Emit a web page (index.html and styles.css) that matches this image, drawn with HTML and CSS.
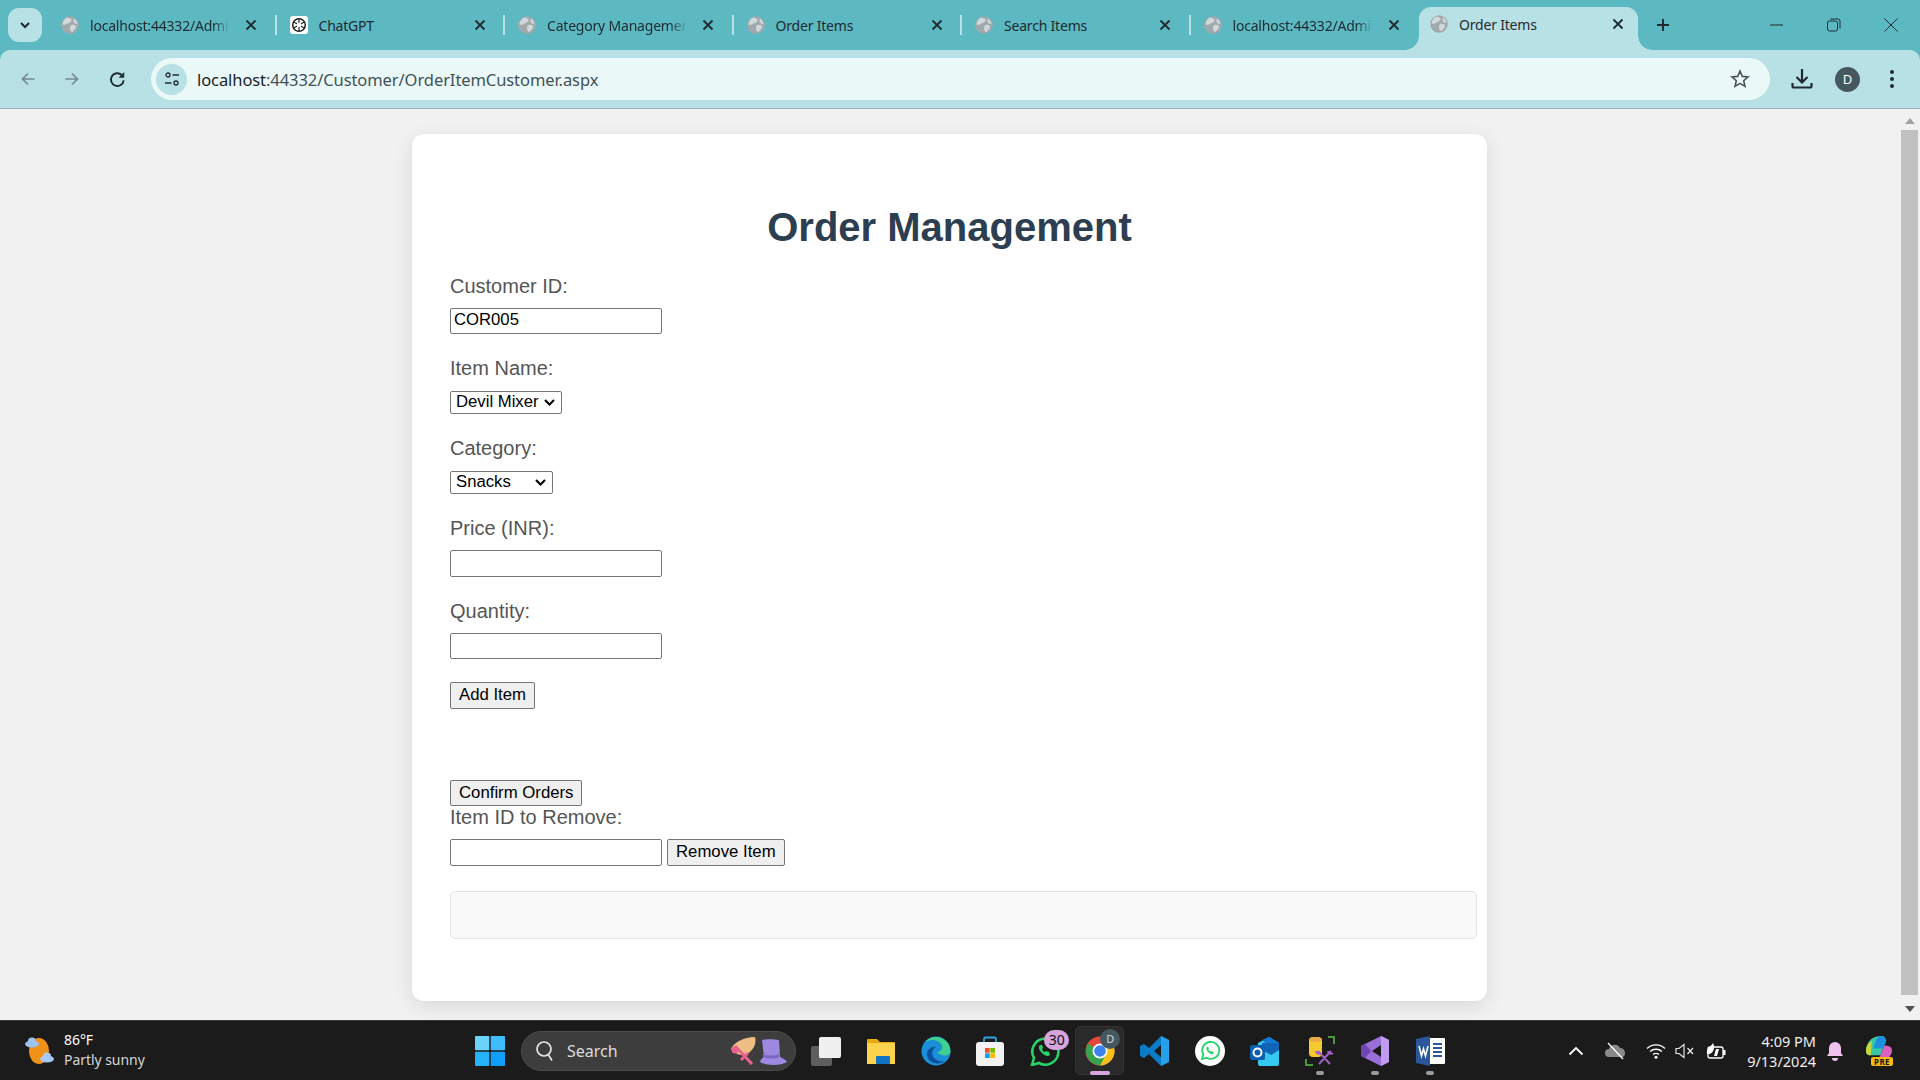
FILE: index.html
```html
<!DOCTYPE html>
<html lang="en">
<head>
<meta charset="utf-8">
<title>Order Items</title>
<link rel="stylesheet" href="styles.css">
</head>
<body>
<svg class="defs" width="0" height="0" aria-hidden="true">
  <symbol id="globe" viewBox="0 0 18 18">
    <circle cx="9" cy="9" r="8.800" fill="#a2a9ad"/>
    <path d="M6 1.500c2 .3 4 .8 4.500 2.200S9 6.500 7 7.300 4 9.500 1.500 8.500C1.500 6 3.500 2.800 6 1.500zM10.500 9c2.500-.5 4.500.5 4.500 2s-2.500 3.200-3.500 5c-1.800 0-2.500-2-2.500-3.800s.3-2.600 1.500-3.200zM13 2.600c1.800 1.200 3 3.200 3.400 5.200-1.300.4-2.800 0-3.500-1.500S12.500 3.600 13 2.600z" fill="#cfd9dc"/>
  </symbol>
  <symbol id="close" viewBox="0 0 12 12">
    <path d="M1.500 1.500l9 9M10.500 1.500l-9 9" stroke="#1f2a30" stroke-width="1.800" fill="none"/>
  </symbol>
</svg>

<header class="chrome">
<div class="tabstrip">
  <div class="tab-search"><svg width="12" height="12" viewBox="0 0 12 12"><path d="M2 4l4 4 4-4" fill="none" stroke="#1f2a30" stroke-width="2"/></svg></div>
  <div class="tab"><svg class="fav"><use href="#globe"/></svg><span class="tab-title fade">localhost:44332/Admin</span><svg class="tab-x"><use href="#close"/></svg></div>
  <i class="sep"></i>
  <div class="tab"><svg class="fav" viewBox="0 0 18 18"><rect width="18" height="18" rx="3" fill="#fff"/><circle cx="9" cy="9" r="6.300" fill="none" stroke="#222" stroke-width="1.500"/><path d="M9 3v12M3.800 6l10.400 6M14.200 6L3.800 12" stroke="#222" stroke-width="1.200"/><circle cx="9" cy="9" r="2.300" fill="#fff"/></svg><span class="tab-title">ChatGPT</span><svg class="tab-x"><use href="#close"/></svg></div>
  <i class="sep"></i>
  <div class="tab"><svg class="fav"><use href="#globe"/></svg><span class="tab-title fade">Category Management</span><svg class="tab-x"><use href="#close"/></svg></div>
  <i class="sep"></i>
  <div class="tab"><svg class="fav"><use href="#globe"/></svg><span class="tab-title">Order Items</span><svg class="tab-x"><use href="#close"/></svg></div>
  <i class="sep"></i>
  <div class="tab"><svg class="fav"><use href="#globe"/></svg><span class="tab-title">Search Items</span><svg class="tab-x"><use href="#close"/></svg></div>
  <i class="sep"></i>
  <div class="tab"><svg class="fav"><use href="#globe"/></svg><span class="tab-title fade">localhost:44332/Admin</span><svg class="tab-x"><use href="#close"/></svg></div>
  <div class="tab active"><svg class="fav"><use href="#globe"/></svg><span class="tab-title">Order Items</span><svg class="tab-x"><use href="#close"/></svg></div>
  <svg class="newtab" width="14" height="14" viewBox="0 0 14 14"><path d="M7 1v12M1 7h12" stroke="#1f2a30" stroke-width="1.900"/></svg>
  <div class="win-ctrls">
    <svg width="14" height="14" viewBox="0 0 14 14"><path d="M0 7h13" stroke="#1f2a30" stroke-width="1"/></svg>
    <svg width="14" height="14" viewBox="0 0 14 14"><rect x=".5" y="3" width="10" height="10" rx="2" fill="none" stroke="#1f2a30"/><path d="M3.500 1h7.500a2 2 0 0 1 2 2v7.500" fill="none" stroke="#1f2a30"/></svg>
    <svg width="14" height="14" viewBox="0 0 14 14"><path d="M.5.500l13 13M13.500.500l-13 13" stroke="#1f2a30" stroke-width="1"/></svg>
  </div>
</div>

<div class="toolbar">
  <div class="nav-btns">
    <svg width="16" height="16" viewBox="0 0 16 16"><path d="M14.500 8H2.500M8 2.500L2.500 8 8 13.500" fill="none" stroke="#74898e" stroke-width="1.700"/></svg>
    <svg width="16" height="16" viewBox="0 0 16 16"><path d="M1.500 8h12M8 2.500L13.500 8 8 13.500" fill="none" stroke="#74898e" stroke-width="1.700"/></svg>
    <svg class="reload" width="17" height="17" viewBox="0 0 16 16"><path d="M13.800 8.800A6 6 0 1 1 12 3.800" fill="none" stroke="#1f2a30" stroke-width="1.800"/><path d="M14.300 1v5.300H9z" fill="#1f2a30"/></svg>
  </div>
  <div class="omnibox">
    <div class="site-chip"><svg width="16" height="16" viewBox="0 0 16 16"><circle cx="4" cy="4" r="2" fill="none" stroke="#1f2a30" stroke-width="1.300"/><path d="M8.500 4H15M1 12h6.500" stroke="#1f2a30" stroke-width="1.300"/><circle cx="12" cy="12" r="2" fill="none" stroke="#1f2a30" stroke-width="1.300"/></svg></div>
    <div class="url"><span class="host">localhost</span>:44332/Customer/OrderItemCustomer.aspx</div>
    <svg class="star" width="20" height="20" viewBox="0 0 20 20"><path d="M10 2l2.300 5.400 5.700.5-4.300 3.800 1.300 5.700L10 14.400 5 17.400l1.300-5.700L2 7.900l5.700-.5z" fill="none" stroke="#4a5559" stroke-width="1.600"/></svg>
  </div>
  <div class="tool-icons">
    <svg width="22" height="22" viewBox="0 0 22 22"><path d="M11 1v13M5.500 9l5.500 5.500L16.500 9" fill="none" stroke="#1f2a30" stroke-width="2.200"/><path d="M1.500 15v3a1.500 1.500 0 0 0 1.500 1.500h16a1.500 1.500 0 0 0 1.500-1.500v-3" fill="none" stroke="#1f2a30" stroke-width="2.200"/></svg>
    <div class="avatar">D</div>
    <svg class="menu-dots" width="6" height="20" viewBox="0 0 6 20"><circle cx="3" cy="3" r="2" fill="#1f2a30"/><circle cx="3" cy="10" r="2" fill="#1f2a30"/><circle cx="3" cy="17" r="2" fill="#1f2a30"/></svg>
  </div>
</div>
</header>

<div class="viewport">
  <main class="card">
    <h1>Order Management</h1>
    <div class="field">
      <label>Customer ID:</label>
      <input class="text" type="text" value="COR005">
    </div>
    <div class="field f-sel">
      <label>Item Name:</label>
      <select class="sel"><option>Devil Mixer</option></select>
    </div>
    <div class="field f-sel">
      <label>Category:</label>
      <select class="sel sel-cat"><option>Snacks</option></select>
    </div>
    <div class="field">
      <label>Price (INR):</label>
      <input class="text tall" type="text">
    </div>
    <div class="field f-qty">
      <label>Quantity:</label>
      <input class="text" type="text">
    </div>
    <button class="btn add">Add Item</button>
    <button class="btn confirm">Confirm Orders</button>
    <label class="remove-label">Item ID to Remove:</label>
    <div class="remove-row">
      <input class="text tall" type="text">
      <button class="btn add">Remove Item</button>
    </div>
    <div class="grid-box"></div>
  </main>
  <div class="scrollbar">
    <svg width="10" height="6" viewBox="0 0 10 6"><path d="M5 0l5 6H0z" fill="#a3a3a3"/></svg>
    <div class="thumb"></div>
    <svg width="10" height="6" viewBox="0 0 10 6"><path d="M0 0h10L5 6z" fill="#505050"/></svg>
  </div>
</div>

<footer class="taskbar">
  <div class="weather">
    <svg width="32" height="32" viewBox="0 0 32 32"><ellipse cx="15" cy="16" rx="10" ry="13" fill="#f0921a"/><ellipse cx="8" cy="9" rx="7" ry="3.500" fill="#9cc3f2"/><ellipse cx="8" cy="6" rx="4" ry="3.500" fill="#9cc3f2"/><ellipse cx="23" cy="24" rx="7" ry="3.500" fill="#a6c9f5"/><ellipse cx="23" cy="21" rx="4" ry="3.500" fill="#a6c9f5"/></svg>
    <div class="weather-text"><div class="temp">86°F</div><div class="cond">Partly sunny</div></div>
  </div>
  <div class="center-icons">
    <svg class="ti start" viewBox="0 0 30 30"><rect width="14.300" height="14.300" rx="1" fill="#6ad2fb"/><rect x="15.700" width="14.300" height="14.300" rx="1" fill="#3fbdfa"/><rect y="15.700" width="14.300" height="14.300" rx="1" fill="#25b2fb"/><rect x="15.700" y="15.700" width="14.300" height="14.300" rx="1" fill="#0f9ffa"/></svg>
    <div class="search">
      <svg width="20" height="22" viewBox="0 0 20 22"><circle cx="9" cy="9" r="7" fill="none" stroke="#e6e6e6" stroke-width="1.700"/><path d="M13.500 15l3.500 5.500" stroke="#e6e6e6" stroke-width="1.700"/></svg>
      <span>Search</span>
      <svg class="hats" width="58" height="28" viewBox="0 0 58 28"><path d="M1 12C4 5 14 0 25 0c2 6-2 15-10 18-5 1-9-1-14-6z" fill="#eebd82"/><path d="M5 9l17 18M11 23l7-7" stroke="#e9618d" stroke-width="3"/><circle cx="5" cy="13" r="3.500" fill="#e9618d"/><path d="M32 3c4-1 12-1 17 0l1 17c3 1 6 3 7 5-6 4-21 4-27 0 1-3 2-4 4-5z" fill="#9d8ae0"/><path d="M33 17c5 2 11 2 16 0v3c-5 2-11 2-16 0z" fill="#7a66c8"/></svg>
    </div>
    <svg class="ti" viewBox="0 0 30 30"><rect x="0" y="10" width="21" height="20" rx="2" fill="#5e5e5e"/><rect x="8" y="10" width="13" height="12" fill="#a9a9a9"/><rect x="8" y="1" width="22" height="21" rx="2" fill="#f0f0f0"/></svg>
    <svg class="ti" viewBox="0 0 30 30"><path d="M1 4a1 1 0 0 1 1-1h9l3 3h14a1 1 0 0 1 1 1v21H1z" fill="#e9a80b"/><rect x="1" y="7" width="28" height="21" fill="#ffd24d"/><rect x="10" y="20" width="14" height="8" rx="1" fill="#1272c4"/></svg>
    <svg class="ti" viewBox="0 0 30 30"><circle cx="15" cy="15" r="14.500" fill="#1a8fd8"/><path d="M29.500 16A14.500 14.500 0 0 0 4 6c7-4 15-2 17 4 1 3-2 6-5 6 4 5 13.500 4 13.500 0z" fill="#3fcf8e"/><path d="M6 18c0-5 5-8 9-7-4 2-5 7-2 11 3 3 7 4 11 3-6 5-18 2-18-7z" fill="#0d4f9a"/></svg>
    <svg class="ti" viewBox="0 0 30 30"><path d="M9 7V3a1.500 1.500 0 0 1 1.500-1.500h9A1.500 1.500 0 0 1 21 3v4" fill="none" stroke="#2aa6e0" stroke-width="1.800"/><rect x="1" y="6" width="28" height="24" rx="3" fill="#f2f2f2"/><rect x="10" y="12" width="4.700" height="4.700" fill="#f25022"/><rect x="15.300" y="12" width="4.700" height="4.700" fill="#7fba00"/><rect x="10" y="17.300" width="4.700" height="4.700" fill="#00a4ef"/><rect x="15.300" y="17.300" width="4.700" height="4.700" fill="#ffb900"/></svg>
    <div class="ti-wrap">
      <svg class="ti" viewBox="0 0 30 30"><path d="M2 29l2-7a13 13 0 1 1 5 5z" fill="none" stroke="#25d366" stroke-width="2.600"/><path d="M10 9c-2 2-1 5 2 8s6 4 8 2l-1-3-3-1-1 1c-1 0-3-2-3-3l1-1-1-3z" fill="#25d366"/></svg>
      <span class="badge">30</span>
    </div>
    <div class="ti-wrap chrome-wrap">
      <svg class="ti" viewBox="0 0 30 30"><circle cx="15" cy="15" r="14.500" fill="#e8453c"/><path d="M15 29.500A14.500 14.500 0 0 0 29 11H15z" fill="#f9c01a"/><path d="M15 15L3 7.500A14.500 14.500 0 0 0 15 29.500L22 17z" fill="#36a44c"/><circle cx="15" cy="15" r="7.500" fill="#fff"/><circle cx="15" cy="15" r="5.800" fill="#3b82ee"/></svg>
      <span class="chrome-badge">D</span>
      <i class="active-pill"></i>
    </div>
    <svg class="ti" viewBox="0 0 30 30"><path d="M21 0l8 4v22l-8 4L9 18l-5 4-4-2V10l4-2 5 4z" fill="#0a7bc7"/><path d="M21 0l8 4v22l-8 4z" fill="#24a1ea"/><path d="M21 9l-7 6 7 6z" fill="#1b1b1b"/></svg>
    <svg class="ti" viewBox="0 0 30 30"><circle cx="15" cy="15" r="15" fill="#fff"/><path d="M7 23l1.300-4.500a8.500 8.500 0 1 1 3.300 3.300z" fill="none" stroke="#25d366" stroke-width="1.800"/><path d="M12 11c-1.300 1.300-.6 3.300 1.300 5.200s4 2.600 5.300 1.300l-.7-2-2-.6-.6.600c-.6 0-2-1.300-2-2l.6-.6-.6-2z" fill="#25d366"/></svg>
    <svg class="ti" viewBox="0 0 30 30"><path d="M8 7l11-6 10 6v21a2 2 0 0 1-2 2H10a2 2 0 0 1-2-2z" fill="#35c8f0"/><path d="M12 4l7-3 10 6-8 5z" fill="#0f78d4"/><path d="M29 7v7l-8 5-9-5V7z" fill="#1065b5"/><rect x="0" y="9" width="15" height="15" rx="2" fill="#0a5fb0"/><circle cx="7.500" cy="16.500" r="4" fill="none" stroke="#fff" stroke-width="2"/></svg>
    <div class="ti-wrap">
      <svg class="ti" viewBox="0 0 30 30"><path d="M1 23v6h7M23 1h6v7" fill="none" stroke="#4a9a3c" stroke-width="2"/><rect x="4" y="1" width="13" height="20" rx="4" fill="#f3cb2f"/><ellipse cx="10.500" cy="3.500" rx="6.500" ry="2.500" fill="#e9a84a"/><path d="M13 15l12 13M26 15L14 28M23 15a3 3 0 0 0 5 2M11 15a3 3 0 0 0 5 2" stroke="#a160c4" stroke-width="2" fill="none"/></svg>
      <i class="run-dot"></i>
    </div>
    <div class="ti-wrap">
      <svg class="ti" viewBox="0 0 30 30"><path d="M21 0l8 4v22l-8 4L1 20V10z" fill="#9a6fd8"/><path d="M21 0l8 4v22l-8 4z" fill="#c09cf0"/><path d="M21 9v12l-9-6z" fill="#1b1b1b"/><path d="M1 10l4-2 6 7-6 7-4-2z" fill="#6f45b3"/></svg>
      <i class="run-dot"></i>
    </div>
    <div class="ti-wrap">
      <svg class="ti" viewBox="0 0 30 30"><path d="M11 2h18a1 1 0 0 1 1 1v24a1 1 0 0 1-1 1H11z" fill="#fff"/><path d="M18 8h9M18 12h9M18 16h9M18 20h9" stroke="#2b579a" stroke-width="1.800"/><path d="M15 0v30L1 27V3z" fill="#2b579a"/><path d="M4 10l2.500 10 2-7 2 7 2.500-10" fill="none" stroke="#fff" stroke-width="1.600"/></svg>
      <i class="run-dot"></i>
    </div>
  </div>
  <div class="tray">
    <svg class="chev" width="16" height="10" viewBox="0 0 16 10"><path d="M1.500 8.500L8 2l6.500 6.500" fill="none" stroke="#fff" stroke-width="1.800"/></svg>
    <svg class="cloud" width="22" height="18" viewBox="0 0 22 18"><path d="M4 15a4 4 0 0 1 0-8 6 6 0 0 1 11-1 5 5 0 0 1 3 9z" fill="#8a8a8a"/><path d="M3 1l15 16" stroke="#fff" stroke-width="1.300"/></svg>
    <svg class="wifi" width="20" height="16" viewBox="0 0 20 16"><path d="M1 5.500a13 13 0 0 1 18 0M4 8.500a9 9 0 0 1 12 0M7 11.500a5 5 0 0 1 6 0" fill="none" stroke="#fff" stroke-width="1.400"/><circle cx="10" cy="14.300" r="1.500" fill="#fff"/></svg>
    <svg width="20" height="16" viewBox="0 0 20 16"><path d="M1 5.500h3L9 1.500v13l-5-4H1z" fill="none" stroke="#e6e6e6" stroke-width="1.200"/><path d="M12.500 5l5.500 6M18 5l-5.500 6" stroke="#e6e6e6" stroke-width="1.300"/></svg>
    <svg width="22" height="18" viewBox="0 0 22 18"><rect x="3" y="5" width="15" height="11" rx="2" fill="none" stroke="#fff" stroke-width="1.300"/><rect x="18" y="8" width="2.500" height="5" fill="#fff"/><path d="M2 12C1 6 6 5 8 1c2 4 1 9-3 11z" fill="#fff"/><path d="M9 14l2-7 3 0-2 7z" fill="#fff"/></svg>
    <div class="clock"><div>4:09 PM</div><div>9/13/2024</div></div>
    <svg class="bell" width="18" height="20" viewBox="0 0 18 20"><path d="M9 1a6 6 0 0 1 6 6v5l2 3H1l2-3V7a6 6 0 0 1 6-6z" fill="#eec3ee"/><path d="M6 17h6a3 3 0 0 1-6 0z" fill="#eec3ee"/></svg>
    <div class="copilot">
      <svg width="29" height="25" viewBox="0 0 30 26"><path d="M2 16C3 5 10 1 18 1c3 0 4 2 5 5l-6 15H7c-4 0-5-2-5-5z" fill="#38c8a0"/><path d="M18 1c3 0 4 2 5 5l-3 8H10c1-8 4-13 8-13z" fill="#1c8fe0"/><path d="M2 16c0-5 3-8 6-10l-1 15c-4 0-5-2-5-5z" fill="#c8d83a"/><path d="M17 21l4-10c4 0 8 1 8 5 0 5-4 9-9 9h-5z" fill="#d95fc0"/></svg>
      <span class="pre">PRE</span>
    </div>
  </div>
</footer>
</body>
</html>
```
FILE: styles.css
```css
* { box-sizing: border-box; }
html, body { margin: 0; padding: 0; height: 1080px; overflow: hidden; }
body { display: flex; flex-direction: column; background: #f1f1f1; font-family: "Liberation Sans", Arial, sans-serif; }
.defs { position: absolute; }

.chrome { flex: none; background: #5cb9c2; }
.tabstrip { height: 50px; display: flex; align-items: flex-start; padding: 8px 0 0 8px; }
.tab-search { width: 34px; height: 34px; border-radius: 11px; background: #b8e1e5; display: flex; align-items: center; justify-content: center; margin-right: 6px; flex: none; }
.tab { width: 226.500px; height: 34px; display: flex; align-items: center; padding: 0 17.500px 0 13px; flex: none; color: #1f2a30; }
.fav { width: 18px; height: 18px; flex: none; }
.tab-title { width: 140px; flex: none; margin-left: 11px; white-space: nowrap; overflow: hidden; font-family: "Noto Sans", sans-serif; font-size: 14px; letter-spacing: -.2px; }
.fade { -webkit-mask-image: linear-gradient(90deg, #000 88%, transparent); mask-image: linear-gradient(90deg, #000 88%, transparent); }
.tab-x { width: 12px; height: 12px; flex: none; margin-left: 15px; }
.sep { width: 2px; height: 20px; background: #b8e1e5; flex: none; margin-top: 7px; }
.tab.active { width: 219px; height: 43px; margin: -1px 0 0 2px; background: #b8e1e5; border-radius: 12px 12px 0 0; padding: 0 14px 9px 11px; position: relative; }
.tab.active::before, .tab.active::after { content: ""; position: absolute; bottom: 0; width: 14px; height: 14px; }
.tab.active::before { left: -14px; background: radial-gradient(circle at 0 0, #5cb9c2 13.500px, #b8e1e5 14px); }
.tab.active::after { right: -14px; background: radial-gradient(circle at 100% 0, #5cb9c2 13.500px, #b8e1e5 14px); }
.tab.active .tab-title { flex: 1; width: auto; }
.tab.active .tab-x { margin-left: 8px; }
.newtab { margin: 10px 0 0 18px; flex: none; }
.win-ctrls { margin-left: auto; display: flex; gap: 43px; padding: 10px 22px 0 0; }

.toolbar { height: 59px; background: #b8e1e5; border-bottom: 1px solid #94b6bb; display: flex; align-items: center; padding: 0 0 0 20px; border-radius: 10px 10px 0 0; }
.nav-btns { display: flex; align-items: center; gap: 28px; width: 131px; flex: none; }
.reload { margin-left: 1px; }
.omnibox { width: 1619px; height: 42px; background: #ebf8f8; border-radius: 21px; display: flex; align-items: center; padding: 0 20px 0 5px; flex: none; }
.site-chip { width: 31px; height: 31px; border-radius: 50%; background: #b8e1e5; display: flex; align-items: center; justify-content: center; flex: none; }
.url { margin-left: 10px; flex: 1; font-family: "Noto Sans", sans-serif; font-size: 16.500px; letter-spacing: -.08px; color: #3f5258; }
.host { color: #1a2428; }
.tool-icons { display: flex; align-items: center; gap: 22px; margin-left: 21px; }
.menu-dots { margin-left: 7px; }
.avatar { width: 25px; height: 25px; border-radius: 50%; background: #45585f; color: #fff; font: 13px "Noto Sans", sans-serif; display: flex; align-items: center; justify-content: center; }

.viewport { flex: 1; min-height: 0; display: flex; position: relative; }
.card { width: 1075px; height: 867px; margin: 25px 0 0 412px; background: #fff; border-radius: 12px; box-shadow: 0 5px 20px rgba(0,0,0,.1); padding: 70px 10px 0 38px; display: flex; flex-direction: column; align-items: flex-start; flex: none; }
h1 { align-self: stretch; margin: 0 -10px 24px -38px; text-align: center; font-size: 40px; line-height: 46px; font-weight: 700; color: #2c3e50; }
label { font-size: 20px; line-height: 24px; color: #555; display: block; }
.field { display: flex; flex-direction: column; align-items: flex-start; gap: 10px; margin-bottom: 22px; }
.f-sel { gap: 11px; }
.f-qty { margin-bottom: 23px; }
.text { width: 212px; height: 26px; border: 1px solid #767676; border-radius: 2px; padding: 0 3px 2px; font: 16.700px "Liberation Sans", Arial, sans-serif; color: #000; background: #fff; margin: 0; }
.tall { height: 27px; }
.sel { -webkit-appearance: none; appearance: none; width: 112px; height: 23px; font: 16.700px "Liberation Sans", Arial, sans-serif; color: #000; background: #fff url("data:image/svg+xml,%3Csvg xmlns='http://www.w3.org/2000/svg' width='11' height='7' viewBox='0 0 11 7'%3E%3Cpath d='M1 1l4.500 4.500L10 1' fill='none' stroke='%23000' stroke-width='2.100'/%3E%3C/svg%3E") no-repeat right 6px center; border: 1px solid #767676; border-radius: 2px; margin: 0; padding: 0 0 2px 5px; }
.sel-cat { width: 103px; }
.btn { height: 26px; padding: 0 8px; border: 1px solid #767676; border-radius: 2px; background: #efefef; font: 16.750px "Liberation Sans", Arial, sans-serif; color: #000; margin: 0; }
.add { height: 27px; padding-bottom: 2px; }
.confirm { margin-top: 71px; }
.remove-label { margin-top: -1px; }
.remove-row { display: flex; gap: 5px; margin-top: 10px; }
.grid-box { width: 1027px; height: 48px; margin-top: 25px; background: #f9f9f9; border: 1px solid #e2e2e2; border-radius: 5px; }

.scrollbar { width: 17px; position: absolute; right: 2px; top: 0; bottom: 0; display: flex; flex-direction: column; align-items: center; padding: 9px 0 8px; }
.thumb { width: 17px; flex: 1; margin: 6px 0 11px; background: #c1c1c1; }

.taskbar { height: 60px; flex: none; background: #1b1b1b; border-top: 1px solid #3a3a3a; display: flex; align-items: center; position: relative; color: #fff; }
.weather { display: flex; align-items: center; gap: 8px; padding-left: 24px; width: 475px; flex: none; }
.weather-text { font: 14px/20px "Noto Sans", sans-serif; letter-spacing: -.05px; margin-top: -2px; }
.temp { color: #fff; }
.cond { color: #d6d6d6; }
.center-icons { display: flex; align-items: center; gap: 24.900px; flex: none; }
.ti { width: 30px; height: 30px; display: block; flex: none; }
.search { width: 275px; height: 40px; margin: 0 -10px 0 -9px; border-radius: 20px; background: #3d3d3d; border: 1px solid #4c4c4c; display: flex; align-items: center; padding: 0 7px 0 13px; font: 16px "Noto Sans", sans-serif; color: #dcdcdc; }
.search span { margin-left: 12px; flex: 1; }
.hats { flex: none; }
.ti-wrap { position: relative; width: 30px; height: 30px; flex: none; }
.badge { position: absolute; top: -6px; right: -9px; width: 25px; height: 20px; border-radius: 10px; background: #d7a4dd; color: #111; font: 14px/20px "Noto Sans", sans-serif; text-align: center; }
.chrome-wrap::before { content: ""; position: absolute; inset: -10px -9px -9px -10px; background: #2a2a2a; border: 1px solid #333; border-radius: 5px; }
.chrome-wrap .ti { position: relative; }
.chrome-badge { position: absolute; top: -7px; right: -5px; width: 20px; height: 20px; border-radius: 50%; background: #45585f; color: #cfd8dc; font: 11px/20px "Noto Sans", sans-serif; text-align: center; }
.active-pill { position: absolute; left: 5px; bottom: -9px; width: 20px; height: 4px; border-radius: 2px; background: #d7a4dd; }
.run-dot { position: absolute; left: 11px; bottom: -9px; width: 8px; height: 4px; border-radius: 2px; background: #9a9a9a; }
.tray { position: absolute; right: 0; top: 0; bottom: 0; width: 352px; display: flex; align-items: center; gap: 10px; }
.chev { margin-right: 11px; }
.cloud { margin-right: 9px; }
.wifi { margin-right: -1px; }
.clock { margin-left: 7px; font: 14.500px/20px "Noto Sans", sans-serif; text-align: right; color: #f0f0f0; width: 72px; }
.copilot { position: relative; width: 29px; height: 25px; margin-left: 10px; top: -3px; }
.pre { position: absolute; left: 7px; bottom: -6px; width: 22px; height: 9px; background: #f5b90f; color: #111; font: 700 8px/9px "Noto Sans", sans-serif; border-radius: 2px; text-align: center; letter-spacing: .4px; }
```
